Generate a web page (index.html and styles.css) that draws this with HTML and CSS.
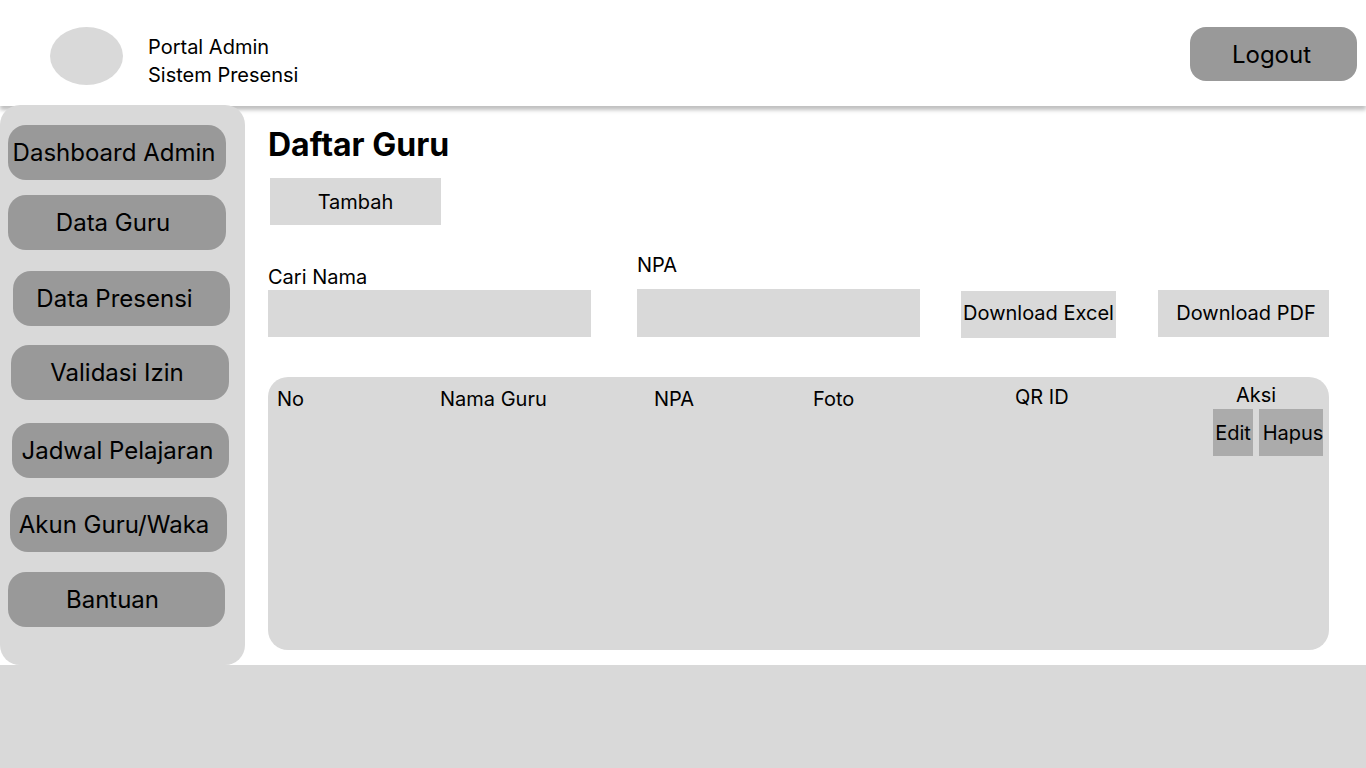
FILE: index.html
```html
<!DOCTYPE html>
<html lang="id">
<head>
<meta charset="utf-8">
<title>Portal Admin - Daftar Guru</title>
<link rel="stylesheet" href="styles.css">
</head>
<body>
<header class="topbar">
  <div class="logo"></div>
  <div class="brand">
    <div>Portal Admin</div>
    <div>Sistem Presensi</div>
  </div>
  <button class="logout">Logout</button>
</header>
<div class="layout">
  <nav class="sidebar">
    <a class="nav-item">Dashboard Admin</a>
    <a class="nav-item">Data Guru</a>
    <a class="nav-item">Data Presensi</a>
    <a class="nav-item">Validasi Izin</a>
    <a class="nav-item">Jadwal Pelajaran</a>
    <a class="nav-item">Akun Guru/Waka</a>
    <a class="nav-item">Bantuan</a>
  </nav>
  <main class="content">
    <h1 class="title">Daftar Guru</h1>
    <button class="btn-add">Tambah</button>
    <div class="filters">
      <div class="field field-name">
        <label class="field-label">Cari Nama</label>
        <div class="input"></div>
      </div>
      <div class="field field-npa">
        <label class="field-label">NPA</label>
        <div class="input"></div>
      </div>
      <button class="btn-dl btn-excel">Download Excel</button>
      <button class="btn-dl btn-pdf">Download PDF</button>
    </div>
    <section class="table">
      <div class="th th-no">No</div>
      <div class="th th-nama">Nama Guru</div>
      <div class="th th-npa">NPA</div>
      <div class="th th-foto">Foto</div>
      <div class="th th-qr">QR ID</div>
      <div class="th th-aksi">
        <div class="aksi-label">Aksi</div>
        <div class="aksi-btns">
          <span class="act act-edit">Edit</span>
          <span class="act act-hapus">Hapus</span>
        </div>
      </div>
    </section>
  </main>
</div>
<footer class="footer"></footer>
</body>
</html>
```

FILE: styles.css
```css
* { box-sizing: border-box; }
html, body { margin: 0; padding: 0; }
body {
  font-family: Inter, "Noto Sans", "Liberation Sans", sans-serif;
  color: #000;
  background: #fff;
  width: 1366px;
  height: 768px;
  overflow: hidden;
}
button {
  font-family: inherit;
  border: 0;
  color: #000;
  padding: 0;
  cursor: pointer;
}

.topbar {
  height: 106px;
  display: flex;
  align-items: flex-start;
  padding: 27px 9px 0 50px;
  background: #fff;
  box-shadow: 0 4px 4px rgba(0,0,0,0.25);
  position: relative;
  z-index: 1;
}
.logo {
  width: 73px;
  height: 58px;
  border-radius: 50%;
  background: #d9d9d9;
}
.brand {
  margin-left: 25px;
  margin-top: 6px;
  font-size: 20px;
  line-height: 28px;
}
.logout {
  margin-left: auto;
  width: 167px;
  height: 54px;
  background: #999;
  border-radius: 16px;
  font-size: 24px;
  padding-right: 4px;
}

.layout {
  display: flex;
  height: 560px;
  margin-top: -1px;
}
.sidebar {
  width: 245px;
  background: #d9d9d9;
  border-radius: 20px;
  padding-top: 20px;
  display: flex;
  flex-direction: column;
  position: relative;
  z-index: 2;
}
.nav-item {
  width: 218px;
  height: 55px;
  margin-left: 8px;
  padding-right: 8px;
  background: #999;
  border-radius: 18px;
  display: flex;
  align-items: center;
  justify-content: center;
  font-size: 24px;
  white-space: nowrap;
}
.nav-item:nth-child(1) { padding-right: 6px; }
.nav-item:nth-child(2) { margin-top: 15px; }
.nav-item:nth-child(3) { margin-top: 21px; margin-left: 13px; width: 217px; padding-right: 14px; }
.nav-item:nth-child(4) { margin-top: 19px; margin-left: 11px; padding-right: 6px; }
.nav-item:nth-child(5) { margin-top: 23px; margin-left: 12px; width: 217px; padding-right: 6px; }
.nav-item:nth-child(6) { margin-top: 19px; margin-left: 10px; width: 217px; padding-right: 9px; }
.nav-item:nth-child(7) { margin-top: 20px; width: 217px; }

.content {
  flex: 1;
  padding: 20px 0 0 23px;
  display: flex;
  flex-direction: column;
  align-items: flex-start;
}
.title {
  margin: 0;
  font-size: 32px;
  font-weight: 700;
  line-height: 39px;
}
.btn-add {
  margin: 14px 0 0 2px;
  width: 171px;
  height: 47px;
  background: #d9d9d9;
  font-size: 20px;
}

.filters {
  margin-top: 28px;
  display: flex;
  align-items: flex-end;
  height: 84px;
}
.field { display: flex; flex-direction: column; }
.field-label {
  font-size: 20px;
  line-height: 24px;
}
.input { background: #d9d9d9; height: 47px; }
.field-name { width: 323px; }
.field-name .input { margin-top: 1px; }
.field-npa { width: 283px; margin-left: 46px; }
.field-npa .input { margin-top: 12px; height: 48px; }
.btn-dl {
  height: 47px;
  background: #d9d9d9;
  font-size: 20px;
  white-space: nowrap;
}
.btn-excel { width: 155px; margin-left: 41px; margin-bottom: -1px; padding-bottom: 3px; }
.btn-pdf { width: 171px; margin-left: 42px; padding-left: 5px; padding-bottom: 1px; }

.table {
  margin-top: 40px;
  width: 1061px;
  height: 273px;
  background: #d9d9d9;
  border-radius: 20px;
  display: flex;
  align-items: flex-start;
  padding-left: 9px;
}
.th {
  font-size: 20px;
  line-height: 24px;
  margin-top: 10px;
}
.th-no { width: 163px; }
.th-nama { width: 214px; }
.th-npa { width: 159px; }
.th-foto { width: 202px; }
.th-qr { width: 198px; margin-top: 8px; }
.th-aksi { margin-top: 6px; }
.aksi-label { margin-left: 23px; }
.aksi-btns { display: flex; gap: 6px; margin-top: 2px; }
.act {
  height: 47px;
  background: #ababab;
  display: flex;
  align-items: center;
  justify-content: center;
  font-size: 20px;
}
.act-edit { width: 40px; }
.act-hapus { width: 64px; padding-left: 4px; }

.footer {
  height: 103px;
  background: #d9d9d9;
}
```
